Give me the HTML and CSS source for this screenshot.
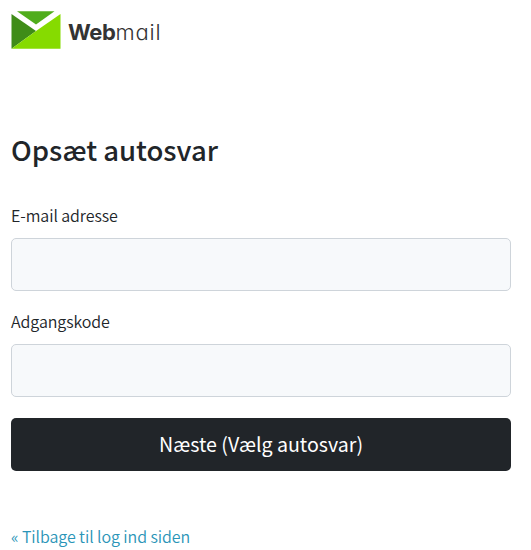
FILE: index.html
```html
<!DOCTYPE html>
<html lang="da">
<head>
    <meta charset="UTF-8" />
    <meta name="viewport" content="width=device-width, initial-scale=1.0" />
    <title>Webmail - Opsæt autosvar</title>
    <link rel="stylesheet" href="styles.css">
</head>
<body>
    <main class="page">
        <header class="logo">
            <svg class="logo-icon" width="50" height="38" viewBox="0 0 50 38" aria-hidden="true">
                <path fill="#3f8c18" d="M.5 3v34.700L25 20z" />
                <path fill="#86db00" d="M49.500 3v34.700H.5L25 20z" />
                <path fill="#50ad1c" d="M6 .3h37.500L25 13.500z" />
            </svg>
            <span class="logo-text"><b>Web</b><span>mail</span></span>
        </header>

        <h1 class="title">Opsæt autosvar</h1>

        <form class="form">
            <label for="email">E-mail adresse</label>
            <input type="email" id="email" name="email">

            <label for="password">Adgangskode</label>
            <input type="password" id="password" name="password">

            <button type="submit">Næste (Vælg autosvar)</button>
        </form>

        <a class="back-link" href="#">« Tilbage til log ind siden</a>
    </main>
</body>
</html>
```
FILE: styles.css
```css
* {
    margin: 0;
    padding: 0;
    box-sizing: border-box;
}

body {
    background-color: #fff;
    color: #212529;
    font-family: "Source Sans Pro", "Noto Sans CJK SC", sans-serif;
    font-size: 16px;
    font-weight: 350;
    line-height: 24px;
    overflow: hidden;
}

.page {
    width: 500px;
    margin-left: 11px;
    padding-top: 11px;
}

.logo {
    display: flex;
    gap: 7px;
    height: 38px;
}

.logo-text {
    display: flex;
    padding-top: 8px;
    color: #333;
    font-family: Inter, sans-serif;
    font-feature-settings: "cv11";
    font-size: 22px;
    line-height: 26px;
}

.logo-text b {
    font-weight: 700;
    letter-spacing: -0.4px;
}

.logo-text span {
    font-weight: 300;
    letter-spacing: 0.8px;
}

.title {
    margin-top: 82px;
    font-size: 27.5px;
    font-weight: 500;
    line-height: 36px;
}

.form {
    display: flex;
    flex-direction: column;
    margin-top: 36px;
}

.form label {
    margin-bottom: 11px;
    letter-spacing: -0.08px;
}

.form input {
    height: 53px;
    margin-bottom: 18px;
    padding: 0 16px;
    border: 1px solid #ced4da;
    border-radius: 5px;
    background-color: #f7f9fb;
    font: inherit;
}

.form button {
    height: 53px;
    margin-top: 3px;
    padding-bottom: 2px;
    border: none;
    border-radius: 5px;
    background-color: #212529;
    color: #fff;
    font: inherit;
    font-size: 19.6px;
    font-weight: 400;
    cursor: pointer;
}

.back-link {
    display: block;
    margin-top: 53px;
    color: #2b95b8;
    letter-spacing: -0.08px;
    text-decoration: none;
}
```
